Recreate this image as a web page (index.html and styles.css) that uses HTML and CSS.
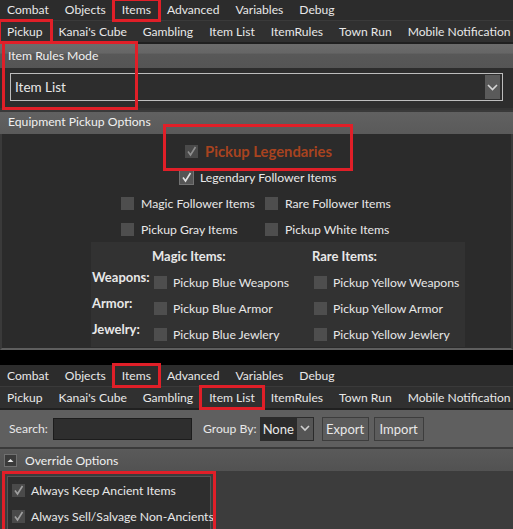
FILE: index.html
```html
<!DOCTYPE html>
<html>
<head>
<meta charset="utf-8">
<link rel="stylesheet" href="styles.css">
</head>
<body>
<div class="shot s1">
  <nav class="tabs main">
    <span class="tab">Combat</span><span class="tab">Objects</span><span class="tab mark">Items</span><span class="tab">Advanced</span><span class="tab">Variables</span><span class="tab">Debug</span>
  </nav>
  <nav class="tabs sub">
    <span class="tab mark">Pickup</span><span class="tab">Kanai's Cube</span><span class="tab">Gambling</span><span class="tab">Item List</span><span class="tab">ItemRules</span><span class="tab">Town Run</span><span class="tab">Mobile Notification</span>
  </nav>
  <section class="group mode">
    <div class="ghead">Item Rules Mode</div>
    <div class="modebody">
      <div class="select"><span>Item List</span><span class="dd"><svg width="11" height="7" viewBox="0 0 11 7"><path d="M1 1 L5.5 5.5 L10 1" fill="none" stroke="#d6d6d6" stroke-width="1.6"/></svg></span></div>
    </div>
    <div class="annot"></div>
  </section>
  <section class="group equip">
    <div class="ghead g2">Equipment Pickup Options</div>
    <div class="equipbody">
      <div class="row legend-row">
        <label class="check legend"><span class="cb on dis"><svg width="13" height="13" viewBox="0 0 13 13"><path d="M3 6.5 L5.5 10 L10.5 2" fill="none" stroke="#8f8f8f" stroke-width="1.6"/></svg></span>Pickup Legendaries</label>
      </div>
      <div class="row follower-row">
        <label class="check"><span class="cb on bord"><svg width="13" height="13" viewBox="0 0 13 13"><path d="M3 6.5 L5.5 10 L10.5 2" fill="none" stroke="#e2e2e2" stroke-width="1.6"/></svg></span>Legendary Follower Items</label>
      </div>
      <div class="pair">
        <label class="check"><span class="cb"></span>Magic Follower Items</label>
        <label class="check"><span class="cb"></span>Rare Follower Items</label>
        <label class="check"><span class="cb"></span>Pickup Gray Items</label>
        <label class="check"><span class="cb"></span>Pickup White Items</label>
      </div>
      <div class="matrix">
        <span></span><b class="colh">Magic Items:</b><b class="colh">Rare Items:</b>
        <b class="rowh">Weapons:</b><label class="check m"><span class="cb"></span>Pickup Blue Weapons</label><label class="check m"><span class="cb"></span>Pickup Yellow Weapons</label>
        <b class="rowh">Armor:</b><label class="check m"><span class="cb"></span>Pickup Blue Armor</label><label class="check m"><span class="cb"></span>Pickup Yellow Armor</label>
        <b class="rowh">Jewelry:</b><label class="check m"><span class="cb"></span>Pickup Blue Jewlery</label><label class="check m"><span class="cb"></span>Pickup Yellow Jewlery</label>
      </div>
    </div>
  </section>
</div>
<div class="divider"></div>
<div class="shot s2">
  <nav class="tabs main">
    <span class="tab">Combat</span><span class="tab">Objects</span><span class="tab mark">Items</span><span class="tab">Advanced</span><span class="tab">Variables</span><span class="tab">Debug</span>
  </nav>
  <nav class="tabs sub">
    <span class="tab">Pickup</span><span class="tab">Kanai's Cube</span><span class="tab">Gambling</span><span class="tab mark">Item List</span><span class="tab">ItemRules</span><span class="tab">Town Run</span><span class="tab">Mobile Notification</span>
  </nav>
  <div class="toolbar">
    <span class="lbl">Search:</span>
    <span class="input"></span>
    <span class="lbl gb">Group By:</span>
    <span class="gsel"><span class="gval">None</span><span class="gdd"><svg width="10" height="7" viewBox="0 0 10 7"><path d="M1 1 L5 5 L9 1" fill="none" stroke="#cfcfcf" stroke-width="1.6"/></svg></span></span>
    <span class="btn export">Export</span>
    <span class="btn import">Import</span>
  </div>
  <section class="override">
    <div class="ohead"><span class="collapse"><svg width="11" height="11" viewBox="0 0 11 11"><path d="M2.5 7 L5.5 4 L8.5 7 Z" fill="#e8e8e8"/></svg></span>Override Options</div>
    <div class="obody">
      <div class="opanel">
        <label class="check o"><span class="cb on dis"><svg width="13" height="13" viewBox="0 0 13 13"><path d="M3 6.5 L5.5 10 L10.5 2" fill="none" stroke="#a0a0a0" stroke-width="1.6"/></svg></span>Always Keep Ancient Items</label>
        <label class="check o"><span class="cb on dis"><svg width="13" height="13" viewBox="0 0 13 13"><path d="M3 6.5 L5.5 10 L10.5 2" fill="none" stroke="#a0a0a0" stroke-width="1.6"/></svg></span>Always Sell/Salvage Non-Ancients</label>
      </div>
    </div>
  </section>
</div>
</body>
</html>
```
FILE: styles.css
```css
* { box-sizing: border-box; margin: 0; padding: 0; }
html, body { width: 513px; height: 529px; overflow: hidden; }
body {
  background: #2d2d2d;
  font-family: Lato, "Open Sans", sans-serif;
  font-size: 12px;
  color: #e8e8e8;
}
.tabs { display: flex; white-space: nowrap; }
.tabs .tab { padding: 0 8px; display: block; font-size: 12.1px; flex: none; }
.tabs .tab:first-child { padding-left: 7px; }
.tabs .tab:last-child { padding-right: 0; }
.main { height: 21px; line-height: 20px; background: #2c2c2c; border-bottom: 1px solid #3a3a3a; }
.sub { height: 23px; line-height: 21px; background: #303030; border-bottom: 2px solid #202020; }
.s2 .main { height: 22px; line-height: 21px; }
.mark { outline: 3px solid #e01f28; outline-offset: -1px; }

.group { position: relative; }
.ghead {
  height: 24px; line-height: 24px; padding-left: 8px; color: #f0f0f0; font-size: 12.2px;
  background: linear-gradient(#6c6c6c 0, #666 38%, #585858 42%, #555 100%);
}
.modebody { height: 42px; padding: 5px 10px 0; border-bottom: 2px solid #343434; }
.select {
  height: 28px; border: 1px solid #bdbdbd; display: flex; align-items: center;
  justify-content: space-between; padding: 0 2px 0 4px; font-size: 13.5px; background: #2d2d2d;
}
.dd { width: 15px; height: 24px; background: #5a5a5a; display: flex; align-items: center; justify-content: center; }
.annot { position: absolute; left: 2px; top: -3px; width: 136px; height: 69px; border: 3px solid #e01f28; }

.g2 { background: linear-gradient(#3a3a3a 0, #3a3a3a 2px, #616161 2px, #5a5a5a 100%); }
.equipbody {
  height: 216px; padding-top: 4px;
  border-left: 2px solid #3a3a3a; border-right: 2px solid #3a3a3a; border-bottom: 2px solid #5e5e5e;
  background: #2b2b2b;
}
.row { height: 26px; display: flex; align-items: center; }
.check { display: flex; align-items: center; gap: 7px; white-space: nowrap; font-size: 12.2px; }
.cb { width: 13px; height: 13px; background: #4e4e4e; flex: none; display: block; }
.cb svg { display: block; }
.cb.bord { background: #555; box-shadow: 0 0 0 1px #727272; }
.cb.dis { background: #4a4a4a; }
.legend-row { padding-left: 183px; }
.legend { position: relative; font-weight: bold; font-size: 14.8px; color: #a8431f; }
.legend::after {
  content: ""; position: absolute; left: -22px; right: -21px; top: -18px; bottom: -11px;
  border: 3px solid #e01f28;
}
.follower-row { padding-left: 178px; }
.pair { display: grid; grid-template-columns: 144px auto; grid-auto-rows: 26px; align-items: center; padding-left: 119px; }

.matrix {
  margin-left: 89px; width: 374px; height: 105px; background: #323232;
  display: grid; grid-template-columns: 60px 160px 1fr; grid-auto-rows: 26px;
  padding: 1px 0 0 1px; align-items: center;
}
.matrix b { font-weight: bold; font-size: 13px; }
.rowh { align-self: start; line-height: 16px; }
.check.m { gap: 6px; }
.check.m .cb { margin-left: 2px; }

.divider { height: 15px; background: #000; }

.toolbar {
  height: 39px; background: #5f5f5f; border-bottom: 2px solid #3a3a3a;
  display: flex; align-items: center; padding-left: 9px; white-space: nowrap; font-size: 12.2px;
}
.toolbar > * { flex: none; }
.input { width: 139px; height: 22px; background: #2e2e2e; border: 1px solid #1c1c1c; margin-left: 5px; }
.gb { margin-left: 11px; }
.gsel { margin-left: 3px; width: 54px; height: 24px; background: #2b2b2b; display: flex; align-items: center; justify-content: space-between; padding: 0 1px 0 3px; font-size: 13px; }
.gdd { width: 16px; height: 22px; background: #555; display: flex; align-items: center; justify-content: center; }
.btn { height: 24px; line-height: 22px; background: #5c5c5c; border: 1px solid #3d3d3d; text-align: center; font-size: 13px; }
.export { margin-left: 8px; width: 47px; }
.import { margin-left: 5px; width: 50px; }

.ohead { height: 22px; background: linear-gradient(#5a5a5a, #525252); display: flex; align-items: center; color: #f0f0f0; font-size: 12.2px; }
.collapse { width: 13px; height: 13px; margin-left: 4px; margin-right: 8px; background: #3b3b3b; border: 1px solid #707070; display: flex; align-items: center; justify-content: center; }
.obody { height: 60px; background: #3c3c3c; padding: 5px 0 0 7px; }
.opanel { width: 204px; height: 60px; background: #2e2e2e; border: 1px solid #555; outline: 3px solid #e01f28; outline-offset: 2px; padding-left: 4px; }
.check.o { height: 26px; gap: 6px; }
```
